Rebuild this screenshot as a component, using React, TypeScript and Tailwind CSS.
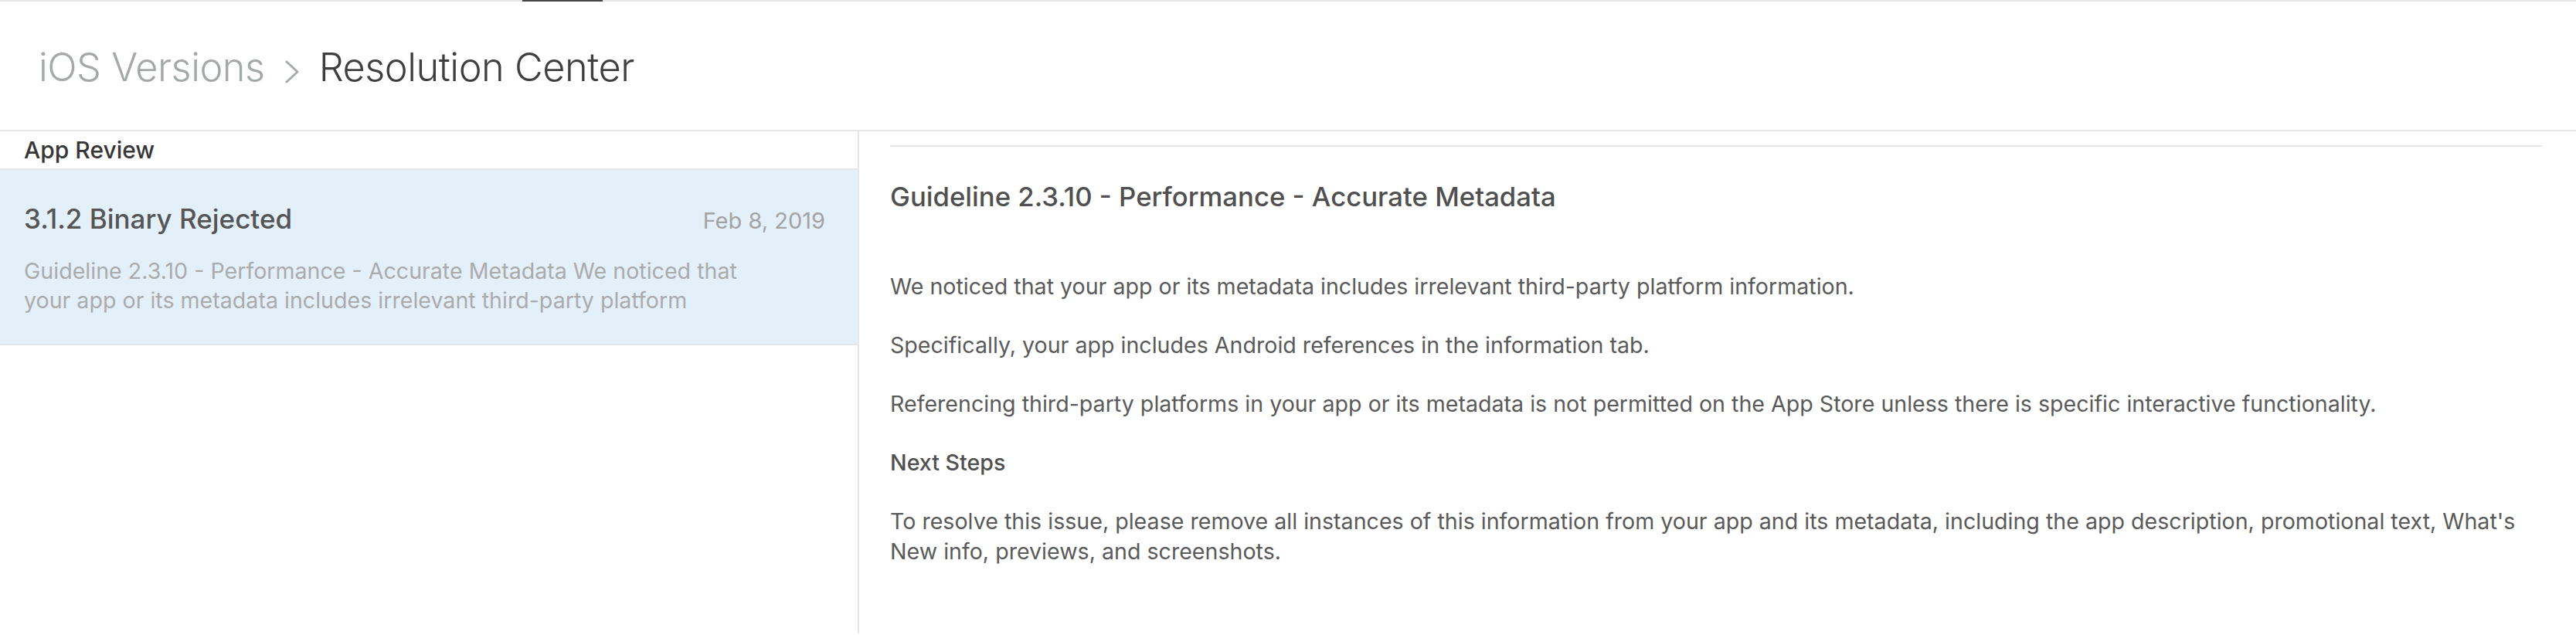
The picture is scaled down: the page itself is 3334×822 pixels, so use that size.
const paragraphs = [
  "We noticed that your app or its metadata includes irrelevant third-party platform information.",
  "Specifically, your app includes Android references in the information tab.",
  "Referencing third-party platforms in your app or its metadata is not permitted on the App Store unless there is specific interactive functionality.",
];

const Chevron = () => (
  <svg width="20" height="30" viewBox="0 0 20 30" fill="none" className="mx-[25px] mt-[11px]">
    <polyline points="3,2 17,15 3,28" stroke="#a9acac" strokeWidth="3" strokeLinecap="round" strokeLinejoin="round" />
  </svg>
);

export default function App() {
  return (
    <div className="w-[3334px] h-[822px] bg-white overflow-hidden font-['Inter',_'Liberation_Sans',_sans-serif]">
      {/* top tab strip */}
      <div className="flex h-[2px]">
        <div className="w-[676px] bg-[#e5e5e5]" />
        <div className="w-[104px] bg-[#474747]" />
        <div className="flex-1 bg-[#e5e5e5]" />
      </div>

      <header className="h-[168px] border-b-2 border-[#e6e6e6] flex items-center pl-[50px] pt-[4px]">
        <span className="text-[50.5px] font-light text-[#a4a8a8] tracking-[-0.5px]">iOS Versions</span>
        <Chevron />
        <span className="text-[50.5px] font-light text-[#3f3f3f] tracking-[-0.5px]">Resolution Center</span>
      </header>

      <div className="flex h-[650px]">
        <aside className="w-[1112px] border-r-2 border-[#e6e6e6]">
          <div className="h-[50px] px-[31px] flex items-center border-b-2 border-[#e6e6e6]">
            <span className="text-[30px] font-medium text-[#363636]">App Review</span>
          </div>
          <div className="h-[227px] bg-[#e3f0fa] border-b-2 border-[#e2e6ea] pl-[31px] pr-[42px] pt-[41px]">
            <div className="flex items-baseline justify-between leading-[44px]">
              <span className="text-[35px] font-medium text-[#555555]">3.1.2 Binary Rejected</span>
              <span className="text-[29px] text-[#a3a3a3]">Feb 8, 2019</span>
            </div>
            <p className="mt-[24px] w-[960px] text-[28.6px] leading-[38px] text-[#ababab]">
              Guideline 2.3.10 - Performance - Accurate Metadata We noticed that your app or its metadata includes irrelevant third-party platform
            </p>
          </div>
        </aside>

        <main className="flex-1 pl-[40px] pr-[44px] pt-[18px]">
          <div className="border-t-2 border-[#e6e6e6] pt-[42px]">
            <h2 className="text-[34.7px] leading-[44px] font-medium text-[#505050]">
              Guideline 2.3.10 - Performance - Accurate Metadata
            </h2>
            <div className="mt-[75px] text-[28.6px] leading-[39px] text-[#5a5a5a]">
              {paragraphs.map((p) => (
                <p key={p} className="mb-[37px]">
                  {p}
                </p>
              ))}
              <p className="mb-[37px] font-medium text-[#505050]">Next Steps</p>
              <p>
                To resolve this issue, please remove all instances of this information from your app and its metadata, including the app description, promotional text, What's New info, previews, and screenshots.
              </p>
            </div>
          </div>
        </main>
      </div>
    </div>
  );
}
